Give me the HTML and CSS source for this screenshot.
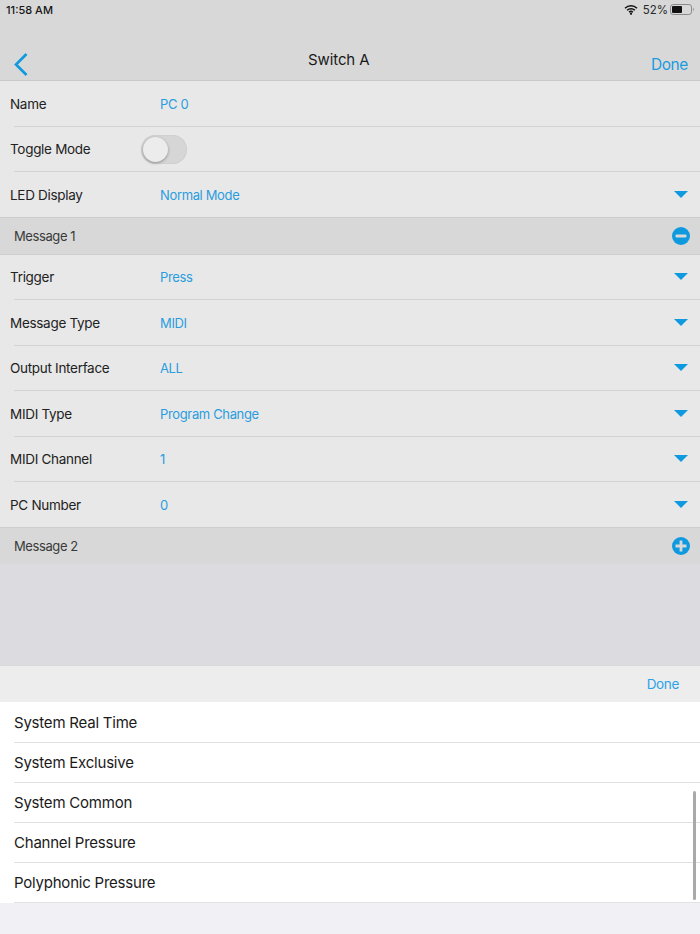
FILE: index.html
```html
<!DOCTYPE html>
<html lang="en">
<head>
<meta charset="utf-8">
<title>Switch A</title>
<link rel="stylesheet" href="styles.css">
</head>
<body>
<div class="screen">
  <header class="topbar">
    <div class="status">
      <span class="time">11:58 AM</span>
      <span class="status-right">
        <svg class="wifi" width="14" height="11" viewBox="0 0 14 11"><path d="M1 4.2a8.5 8.5 0 0 1 12 0M3.1 6.3a5.5 5.5 0 0 1 7.8 0M5.1 8.3a2.7 2.7 0 0 1 3.8 0" fill="none" stroke="#111" stroke-width="1.5"/><circle cx="7" cy="9.8" r="1.1" fill="#111"/></svg>
        <span class="pct">52%</span>
        <svg class="battery" width="25" height="11" viewBox="0 0 25 11"><rect x="0.5" y="0.5" width="21" height="10" rx="2.6" fill="none" stroke="#8a8a8a"/><rect x="2" y="2" width="10" height="7" rx="1" fill="#111"/><path d="M23 3.8c1 .3 1 3.1 0 3.4z" fill="#8a8a8a"/></svg>
      </span>
    </div>
    <div class="nav">
      <svg class="back" width="16" height="24" viewBox="0 0 16 24"><path d="M13.5 2 3 12.5 13.5 23" fill="none" stroke="#0f9ae0" stroke-width="2.6"/></svg>
      <span class="title">Switch A</span>
      <span class="nav-done">Done</span>
    </div>
  </header>

  <main class="form">
    <div class="row"><span class="label">Name</span><span class="value">PC 0</span></div>
    <div class="row"><span class="label">Toggle Mode</span><span class="toggle"><span class="knob"></span></span></div>
    <div class="row last"><span class="label">LED Display</span><span class="value">Normal Mode</span><span class="caret"></span></div>

    <div class="section">
      <span>Message 1</span>
      <svg width="18" height="18" viewBox="0 0 18 18"><circle cx="9" cy="9" r="9" fill="#0f9ae0"/><rect x="3.5" y="7.5" width="11" height="3" rx="1" fill="#d8d8d8"/></svg>
    </div>

    <div class="row"><span class="label">Trigger</span><span class="value">Press</span><span class="caret"></span></div>
    <div class="row"><span class="label">Message Type</span><span class="value">MIDI</span><span class="caret"></span></div>
    <div class="row"><span class="label">Output Interface</span><span class="value">ALL</span><span class="caret"></span></div>
    <div class="row"><span class="label">MIDI Type</span><span class="value">Program Change</span><span class="caret"></span></div>
    <div class="row"><span class="label">MIDI Channel</span><span class="value">1</span><span class="caret"></span></div>
    <div class="row last"><span class="label">PC Number</span><span class="value">0</span><span class="caret"></span></div>

    <div class="section no-border">
      <span>Message 2</span>
      <svg width="18" height="18" viewBox="0 0 18 18"><circle cx="9" cy="9" r="9" fill="#0f9ae0"/><path d="M7.6 3.5h2.8v4.1h4.1v2.8h-4.1v4.1H7.6v-4.1H3.5V7.6h4.1z" fill="#d8d8d8"/></svg>
    </div>
  </main>

  <div class="gap"></div>

  <section class="picker">
    <div class="picker-bar"><span>Done</span></div>
    <div class="picker-list">
      <div class="option"><span>System Real Time</span></div>
      <div class="option"><span>System Exclusive</span></div>
      <div class="option"><span>System Common</span></div>
      <div class="option"><span>Channel Pressure</span></div>
      <div class="option"><span>Polyphonic Pressure</span></div>
      <div class="scrollbar"></div>
    </div>
    <div class="picker-foot"></div>
  </section>
</div>
</body>
</html>
```
FILE: styles.css
```css
* { box-sizing: border-box; }
html, body { margin: 0; padding: 0; }
body {
  font-family: Inter, "Liberation Sans", sans-serif;
  color: #1c1c1c;
  background: #dcdce0;
}
.screen {
  width: 700px;
  height: 934px;
  display: flex;
  flex-direction: column;
  overflow: hidden;
}
.topbar {
  height: 81px;
  flex: none;
  background: #d8d8d8;
  border-bottom: 1px solid #c8c8c8;
  display: flex;
  flex-direction: column;
}
.status {
  height: 19px;
  padding: 0 5px 0 6px;
  display: flex;
  justify-content: space-between;
  align-items: center;
  font-size: 11px;
  font-weight: 500;
  color: #161616;
}
.status-right { display: flex; align-items: center; gap: 4px; }
.pct { color: #2a2a2a; font-weight: 400; font-size: 11.5px; margin-left: 1px; margin-right: -2px; }
.nav {
  flex: 1;
  position: relative;
  display: flex;
  align-items: flex-start;
  justify-content: space-between;
  padding: 0 12px 0 13px;
}
.back { margin-top: 33px; }
.title {
  position: absolute;
  left: 308px;
  top: 31px;
  font-size: 15px;
  letter-spacing: -0.1px;
  color: #1a1a1a;
}
.nav-done { margin-top: 36px; font-size: 15.5px; letter-spacing: -0.4px; color: #1a9be0; }
.form { flex: none; }
.row {
  height: 45.5px;
  background: #e8e8e8;
  display: flex;
  align-items: center;
  position: relative;
  padding: 0 12px 0.5px 10px;
  font-size: 13.5px;
}
.row::after {
  content: "";
  position: absolute;
  left: 14px;
  right: 0;
  bottom: 0;
  height: 1px;
  background: #d2d2d2;
}
.row.last::after { left: 0; background: #cdcdcd; }
.label { width: 150px; flex: none; color: #222; letter-spacing: -0.3px; }
.value { flex: 1; color: #2a9ddf; font-size: 13px; letter-spacing: -0.35px; }
.caret {
  width: 0;
  height: 0;
  border-left: 7px solid transparent;
  border-right: 7px solid transparent;
  border-top: 7px solid #0f9ae0;
  margin-top: -1px;
}
.toggle {
  width: 46px;
  height: 29px;
  margin-left: -19px;
  border-radius: 15px;
  background: #d6d6d6;
  padding: 2px;
  display: block;
  box-shadow: inset 0 0 0 1px #d0d0d0;
}
.knob {
  display: block;
  width: 25px;
  height: 25px;
  border-radius: 50%;
  background: #ececec;
  box-shadow: 0 1px 3px rgba(0,0,0,.35);
}
.section {
  height: 37px;
  background: #d8d8d8;
  border-bottom: 1px solid #cfcfcf;
  display: flex;
  align-items: center;
  justify-content: space-between;
  padding: 0 10px 0 14px;
  font-size: 13px;
  letter-spacing: -0.4px;
  color: #3a3a3a;
}
.section.no-border { border-bottom: 0; height: 36.5px; }
.gap { flex: 1; background: #dcdce0; }
.picker { flex: none; height: 269px; display: flex; flex-direction: column; }
.picker-bar {
  height: 37px;
  background: #ededed;
  border-top: 1px solid #d9d9d9;
  display: flex;
  align-items: center;
  justify-content: flex-end;
  padding-right: 21px;
  font-size: 13.5px;
  letter-spacing: -0.35px;
  color: #2aa3ea;
}
.picker-list { position: relative; background: #fff; height: 201px; padding-top: 1px; }
.option {
  height: 40px;
  margin-left: 14px;
  border-bottom: 1px solid #e2e2e2;
  display: flex;
  align-items: center;
  font-size: 15px;
  letter-spacing: -0.22px;
  color: #1a1a1a;
}
.scrollbar {
  position: absolute;
  right: 4px;
  top: 89px;
  width: 3px;
  height: 109px;
  border-radius: 2px;
  background: #a9a9a9;
}
.picker-foot { flex: 1; background: #f0f0f5; }
```
